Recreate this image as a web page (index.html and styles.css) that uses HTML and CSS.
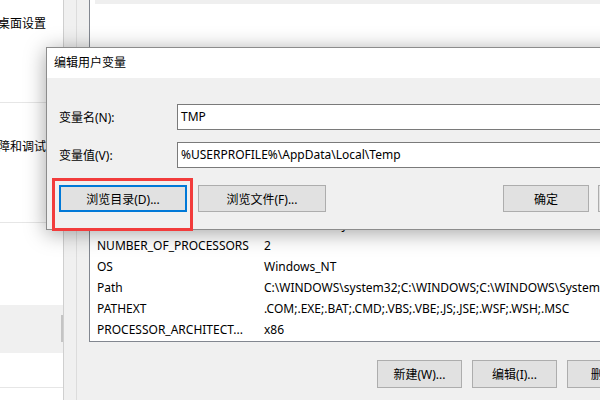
FILE: index.html
```html
<!DOCTYPE html>
<html lang="zh-CN">
<head>
    <meta charset="UTF-8">
    <title>编辑用户变量</title>
    <link rel="stylesheet" href="styles.css">
</head>
<body>
<div class="desk">

    <!-- 后面的设置窗口 -->
    <div class="side-pane">
        <div class="side-item first">桌面设置</div>
        <div class="side-item second">障和调试</div>
        <div class="side-band"></div>
        <div class="side-line"></div>
    </div>

    <!-- 环境变量窗口 -->
    <div class="env-window">
        <div class="env-gutter"></div>
        <div class="env-main">
            <div class="user-list">
                <div class="row-hint"></div>
            </div>
            <div class="sys-list">
                <div class="row"><span class="col-name">DriverData</span><span>C:\Windows\System32\Drivers\DriverData</span></div>
                <div class="row"><span class="col-name">NUMBER_OF_PROCESSORS</span><span>2</span></div>
                <div class="row"><span class="col-name">OS</span><span>Windows_NT</span></div>
                <div class="row"><span class="col-name">Path</span><span>C:\WINDOWS\system32;C:\WINDOWS;C:\WINDOWS\System32\Wbem</span></div>
                <div class="row"><span class="col-name">PATHEXT</span><span>.COM;.EXE;.BAT;.CMD;.VBS;.VBE;.JS;.JSE;.WSF;.WSH;.MSC</span></div>
                <div class="row"><span class="col-name">PROCESSOR_ARCHITECT...</span><span>x86</span></div>
            </div>
            <div class="env-buttons">
                <button class="win-btn wide">新建(W)...</button>
                <button class="win-btn wide">编辑(I)...</button>
                <button class="win-btn wide">删除(L)</button>
            </div>
        </div>
    </div>

    <!-- 编辑用户变量 对话框 -->
    <div class="dialog">
        <div class="dialog-title">编辑用户变量</div>
        <div class="dialog-body">
            <div class="field">
                <label class="field-label">变量名(N):</label>
                <div class="field-input">TMP</div>
            </div>
            <div class="field">
                <label class="field-label">变量值(V):</label>
                <div class="field-input">%USERPROFILE%\AppData\Local\Temp</div>
            </div>
            <div class="dialog-buttons">
                <button class="win-btn browse focused">浏览目录(D)...</button>
                <button class="win-btn browse">浏览文件(F)...</button>
                <button class="win-btn ok">确定</button>
                <button class="win-btn ok">取消</button>
            </div>
        </div>
    </div>

    <!-- 红框标注 -->
    <div class="mark"></div>
</div>
</body>
</html>
```

FILE: styles.css
```css
body {
    margin: 0;
    padding: 0;
    font-family: "Noto Sans", "Noto Sans CJK SC", sans-serif;
    font-size: 12px;
    color: #000;
}

.desk {
    position: relative;
    width: 600px;
    height: 400px;
    overflow: hidden;
    display: flex;
    background-color: #fff;
}

/* 左边被挡住的设置窗口 */
.side-pane {
    flex: none;
    width: 63px;
    background-color: #fff;
    display: flex;
    flex-direction: column;
}

.side-item {
    margin-left: -2px;
    line-height: 18px;
    white-space: nowrap;
    border-bottom: 1px solid #e6e6e6;
}

.side-item.first {
    height: 87px;
    padding-top: 15px;
}

.side-item.second {
    height: 84px;
    padding-top: 35px;
}

.side-band {
    margin-top: 82px;
    height: 48px;
    background-color: #f0f0f0;
    position: relative;
}

.side-band::after {
    content: "";
    position: absolute;
    right: 0;
    top: 10px;
    width: 2px;
    height: 27px;
    background-color: #c4c4c4;
}

.side-line {
    margin-top: 34px;
    border-top: 1px solid #e6e6e6;
}

/* 环境变量窗口 */
.env-window {
    flex: none;
    width: 600px;
    display: flex;
    background-color: #f0f0f0;
    border-left: 1px solid #cfcfcf;
}

.env-gutter {
    width: 12px;
    border-right: 1px solid #dcdcdc;
}

.env-main {
    margin-left: 12px;
    width: 574px;
    display: flex;
    flex-direction: column;
}

.user-list {
    height: 120px;
    background-color: #fff;
    border-left: 1px solid #828790;
}

.row-hint {
    margin-left: 5px;
    height: 4px;
    background-color: #efefef;
}

.sys-list {
    margin-top: 94px;
    padding: 0 0 1px 0;
    background-color: #fff;
    border: 1px solid #828790;
    border-top: none;
}

.row {
    display: flex;
    height: 21px;
    line-height: 21px;
    padding-left: 7px;
    white-space: nowrap;
}

.col-name {
    width: 167px;
    flex: none;
}

.env-buttons {
    display: flex;
    justify-content: flex-end;
    gap: 10px;
    margin-top: 18px;
    padding-right: 11px;
}

/* 按钮 */
.win-btn {
    font-family: "Noto Sans", "Noto Sans CJK SC", sans-serif;
    font-size: 12px;
    color: #000;
    background-color: #e1e1e1;
    border: 1px solid #adadad;
    padding: 0;
    margin: 0;
    box-sizing: border-box;
}

.win-btn.wide {
    width: 85px;
    height: 28px;
}

.win-btn.browse {
    width: 128px;
    height: 27px;
}

.win-btn.ok {
    width: 86px;
    height: 27px;
}

.win-btn.focused {
    border: 2px solid #0078d7;
}

/* 对话框 */
.dialog {
    position: absolute;
    left: 46px;
    top: 47px;
    width: 651px;
    height: 183px;
    box-sizing: border-box;
    border: 1px solid #8c8c8c;
    background-color: #f0f0f0;
    box-shadow: 0 3px 20px rgba(0, 0, 0, 0.36);
}

.dialog-title {
    height: 30px;
    line-height: 30px;
    padding-left: 7px;
    background-color: #fff;
}

.dialog-body {
    padding: 26px 12px 0 12px;
    display: flex;
    flex-direction: column;
    gap: 12px;
}

.field {
    display: flex;
    align-items: center;
}

.field-label {
    width: 118px;
    flex: none;
}

.field-input {
    flex: 1;
    height: 26px;
    line-height: 24px;
    box-sizing: border-box;
    border: 1px solid #7a7a7a;
    background-color: #fff;
    padding-left: 3px;
    white-space: nowrap;
}

.dialog-buttons {
    display: flex;
    gap: 11px;
    margin-top: 5px;
}

.dialog-buttons .ok {
    margin-left: 166px;
}

.dialog-buttons .ok + .ok {
    margin-left: -2px;
}

/* 红框 */
.mark {
    position: absolute;
    left: 52px;
    top: 178px;
    width: 141px;
    height: 53px;
    box-sizing: border-box;
    border: 3px solid #f23c3c;
}
```
